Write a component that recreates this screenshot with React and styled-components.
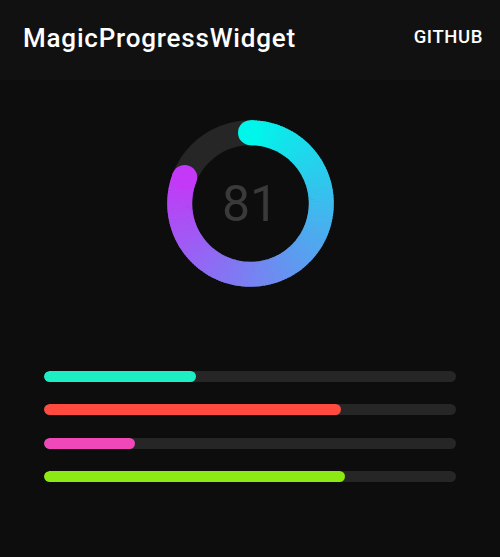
import React from 'react';
import styled, { createGlobalStyle } from 'styled-components';

const GlobalStyle = createGlobalStyle`
  html, body {
    margin: 0;
    padding: 0;
    background: #0d0d0d;
    font-family: Roboto, "Noto Sans", sans-serif;
  }
`;

const bars = [
  { color: '#1eeec4', value: 0.37 },
  { color: '#ff4a3f', value: 0.72 },
  { color: '#f047b9', value: 0.22 },
  { color: '#8de913', value: 0.73 },
];

const START = [0, 246, 234];
const END = [196, 56, 247];

const mix = t =>
  'rgb(' + START.map((c, i) => Math.round(c + (END[i] - c) * t)).join(',') + ')';

const polar = (cx, cy, r, deg) => {
  const a = ((deg - 90) * Math.PI) / 180;
  return [cx + r * Math.cos(a), cy + r * Math.sin(a)];
};

const Ring = ({ percent }) => {
  const size = 167;
  const c = size / 2;
  const r = 70.8;
  const sw = 25;
  const total = percent * 3.6;
  const step = 2;
  const segs = [];
  for (let a = 0; a < total; a += step) {
    const b = Math.min(a + step + 0.6, total);
    const [x1, y1] = polar(c, c, r, a);
    const [x2, y2] = polar(c, c, r, b);
    segs.push(
      <path
        key={a}
        d={`M${x1} ${y1} A${r} ${r} 0 0 1 ${x2} ${y2}`}
        stroke={mix(a / total)}
        strokeWidth={sw}
        fill="none"
      />
    );
  }
  const [sx, sy] = polar(c, c, r, 0);
  const [ex, ey] = polar(c, c, r, total);
  return (
    <svg width={size} height={size} viewBox={`0 0 ${size} ${size}`}>
      <circle cx={c} cy={c} r={r} stroke="#262626" strokeWidth={sw} fill="none" />
      {segs}
      <circle cx={sx} cy={sy} r={sw / 2} fill={mix(0)} />
      <circle cx={ex} cy={ey} r={sw / 2} fill={mix(1)} />
    </svg>
  );
};

const App = () => {
  return (
    <Page>
      <GlobalStyle />
      <Toolbar>
        <Title>MagicProgressWidget</Title>
        <Action>GITHUB</Action>
      </Toolbar>
      <Content>
        <RingWrap>
          <Ring percent={81} />
          <Score>81</Score>
        </RingWrap>
        <BarList>
          {bars.map((b, i) => (
            <Track key={i}>
              <Fill color={b.color} style={{ width: `${b.value * 100}%` }} />
            </Track>
          ))}
        </BarList>
      </Content>
    </Page>
  );
};

export default App;

const Page = styled.div`
  width: 500px;
  height: 557px;
  background: #0d0d0d;
  display: flex;
  flex-direction: column;
`;

const Toolbar = styled.div`
  height: 80px;
  background: #111111;
  display: flex;
  align-items: center;
  justify-content: space-between;
  padding: 0 17px 0 23px;
`;

const Title = styled.div`
  color: #ffffff;
  font-size: 26px;
  font-weight: 500;
  letter-spacing: 0.8px;
  margin-top: -4px;
`;

const Action = styled.div`
  color: #ffffff;
  font-size: 18.5px;
  font-weight: 500;
  letter-spacing: 0.6px;
  margin-top: -6px;
`;

const Content = styled.div`
  display: flex;
  flex-direction: column;
  align-items: center;
  padding-top: 40px;
`;

const RingWrap = styled.div`
  position: relative;
  width: 167px;
  height: 167px;
  svg {
    display: block;
  }
`;

const Score = styled.div`
  position: absolute;
  inset: 0;
  display: flex;
  align-items: center;
  justify-content: center;
  color: #3a3a3a;
  font-size: 50px;
  font-weight: 400;
`;

const BarList = styled.div`
  align-self: stretch;
  display: flex;
  flex-direction: column;
  gap: 22.3px;
  padding: 84px 44px 0;
`;

const Track = styled.div`
  height: 11px;
  border-radius: 6px;
  background: #262626;
  overflow: hidden;
`;

const Fill = styled.div`
  height: 100%;
  border-radius: 6px;
  background: ${props => props.color};
`;
